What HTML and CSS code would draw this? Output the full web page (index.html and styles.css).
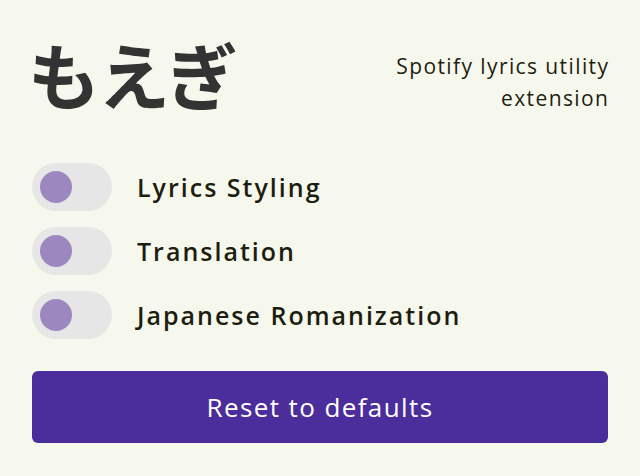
FILE: index.html
```html
<!DOCTYPE html>
<html lang="en">
<head>
<meta charset="utf-8">
<link rel="stylesheet" href="styles.css">
</head>
<body>
<div class="app">
  <header class="header">
    <h1 class="logo">もえぎ</h1>
    <p class="tagline">Spotify lyrics utility<br>extension</p>
  </header>
  <ul class="options">
    <li class="option"><span class="toggle"><span class="knob"></span></span><span class="label">Lyrics Styling</span></li>
    <li class="option"><span class="toggle"><span class="knob"></span></span><span class="label">Translation</span></li>
    <li class="option"><span class="toggle"><span class="knob"></span></span><span class="label">Japanese Romanization</span></li>
  </ul>
  <button class="reset">Reset to defaults</button>
</div>
</body>
</html>
```
FILE: styles.css
```css
html, body {
  margin: 0;
  padding: 0;
  background: #f7f8ed;
}
body {
  font-family: "Open Sans", "Noto Sans", sans-serif;
  color: #1e1e10;
}
.app {
  padding: 32px;
  display: flex;
  flex-direction: column;
}
.header {
  display: flex;
  justify-content: space-between;
  align-items: flex-start;
  height: 96px;
}
.logo {
  margin: -14px 0 0 -4px;
  font-family: "Noto Sans CJK JP", sans-serif;
  font-weight: 700;
  font-size: 72px;
  line-height: 110px;
  color: #333333;
  letter-spacing: -2px;
}
.tagline {
  margin: 18px -1.4px 0 0;
  text-align: right;
  font-size: 21px;
  line-height: 32px;
  letter-spacing: 1.4px;
  color: #1e1e10;
}
.options {
  list-style: none;
  margin: 35px 0 0;
  padding: 0;
  display: flex;
  flex-direction: column;
  gap: 16px;
}
.option {
  display: flex;
  align-items: center;
  gap: 25px;
  height: 48px;
}
.toggle {
  width: 80px;
  height: 48px;
  border-radius: 24px;
  background: #e6e6e6;
  display: flex;
  align-items: center;
  padding: 0 8px;
  box-sizing: border-box;
}
.knob {
  width: 32px;
  height: 32px;
  border-radius: 50%;
  background: #9c88bf;
}
.label {
  font-size: 25px;
  font-weight: 600;
  letter-spacing: 2px;
}
.reset {
  margin-top: 32px;
  height: 72px;
  border: none;
  border-radius: 6px;
  background: #4b2e9b;
  color: #ffffff;
  font-family: "Open Sans", sans-serif;
  font-size: 26px;
  font-weight: 400;
  letter-spacing: 1.4px;
}
```
